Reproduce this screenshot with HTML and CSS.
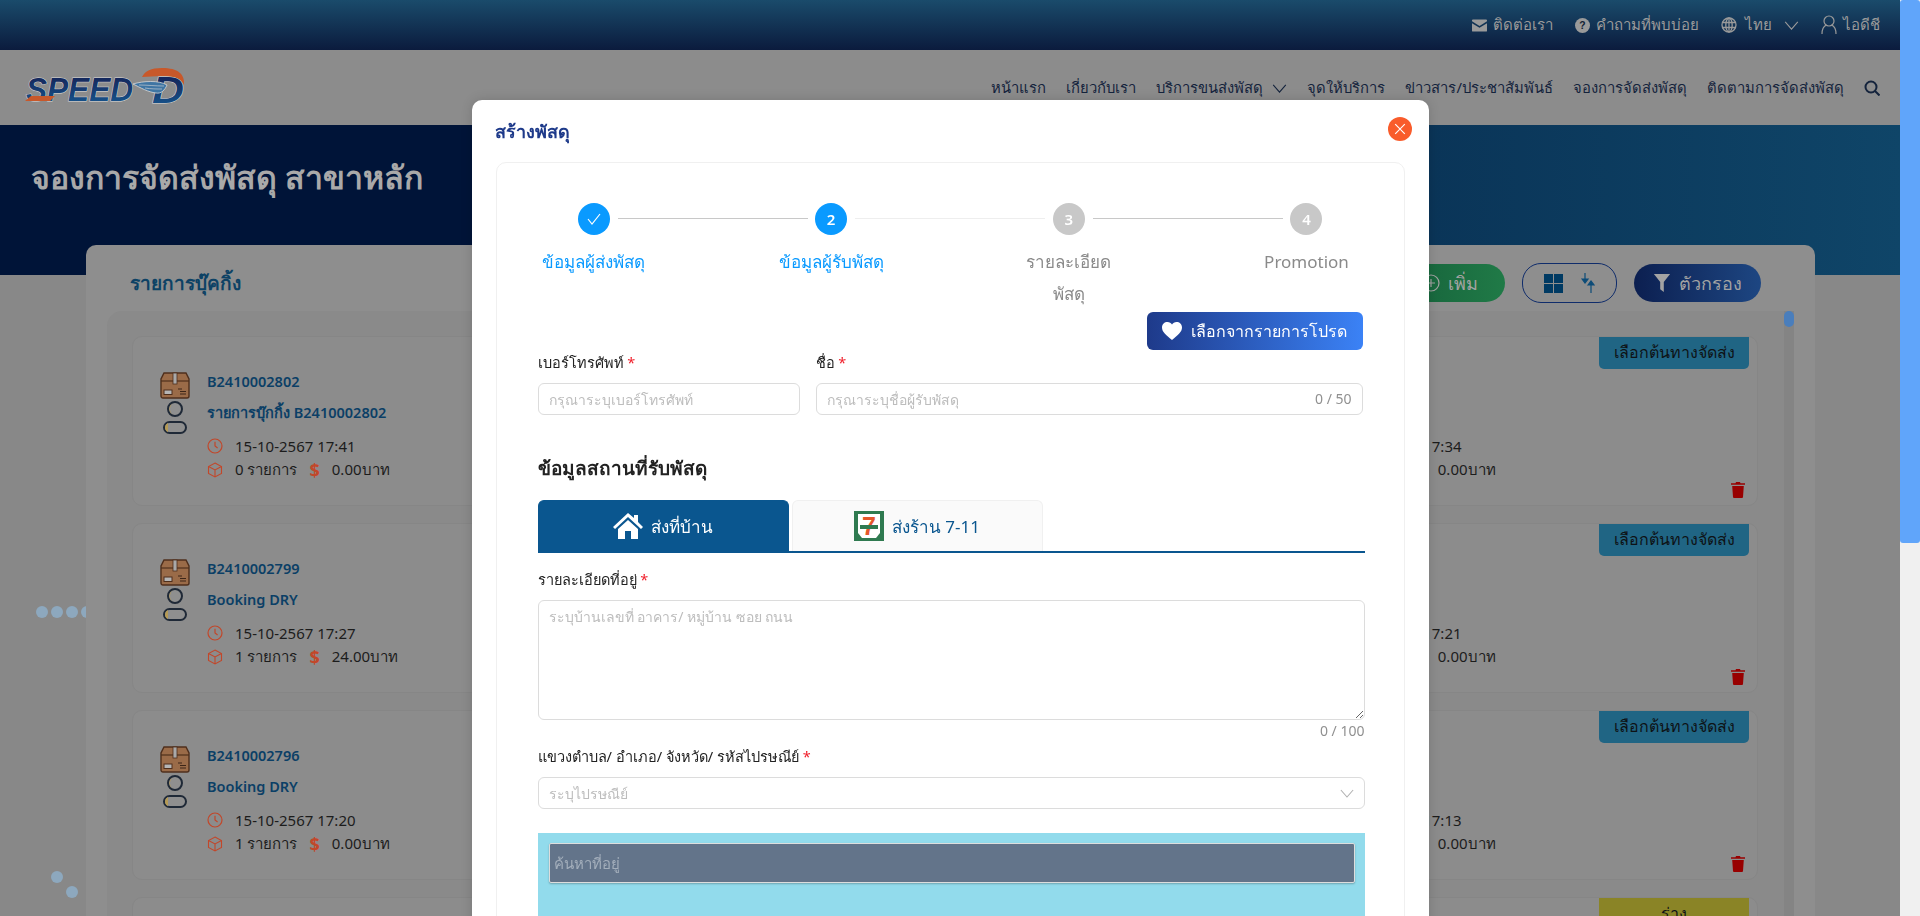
FILE: index.html
```html
<!DOCTYPE html>
<html lang="th">
  <head>
    <meta charset="UTF-8" />
    <meta name="viewport" content="width=device-width, initial-scale=1.0" />
    <title>จองการจัดส่งพัสดุ - Speed D</title>
    <link rel="stylesheet" href="styles.css">
  </head>
  <body>
    <svg class="sprite" width="0" height="0">
      <defs>
        <symbol id="box" viewBox="0 0 30 27">
          <path d="M4 1h22l3 6v17a2 2 0 0 1-2 2H3a2 2 0 0 1-2-2V7z" fill="#9a6b48" stroke="#4f2f1c" stroke-width="1.4"/>
          <path d="M1 9h28" stroke="#4f2f1c" stroke-width="1.2"/>
          <rect x="13" y="1" width="4" height="11" fill="#a9a9a9" stroke="#4f2f1c" stroke-width=".8"/>
          <rect x="4" y="18" width="8" height="4.5" fill="#b5b5b5" stroke="#4f2f1c" stroke-width="1"/>
          <path d="M18 17h4M20 19.5h6M20 22h6" stroke="#3d2618" stroke-width="1.2"/>
        </symbol>
        <symbol id="person" viewBox="0 0 24 33">
          <circle cx="12" cy="8" r="7" fill="#8f8f8f" stroke="#1f2937" stroke-width="2"/>
          <path d="M9 2.500a7 7 0 0 0 0 11 9 9 0 0 1 0-11z" fill="#b59a55"/>
          <rect x="1" y="21" width="22" height="11" rx="5.500" fill="#8f8f8f" stroke="#1f2937" stroke-width="2"/>
          <path d="M2 26a5 5 0 0 1 3-4v9a5 5 0 0 1-3-5z" fill="#b59a55"/>
        </symbol>
        <symbol id="clock" viewBox="0 0 16 16">
          <circle cx="8" cy="8" r="7" fill="none" stroke="currentColor" stroke-width="1.200"/>
          <path d="M8 3.800V8l2.600 2" fill="none" stroke="currentColor" stroke-width="1.200"/>
        </symbol>
        <symbol id="cube" viewBox="0 0 16 16">
          <path d="M8 1l6.500 3.500v7L8 15l-6.500-3.500v-7zM1.500 4.500L8 8l6.500-3.500M8 8v7" fill="none" stroke="currentColor" stroke-width="1.100"/>
        </symbol>
        <symbol id="trash" viewBox="0 0 14 16">
          <path d="M5 0h4l.5 1.200H14v1.600H0V1.200h4.500zM1.200 4h11.600l-.8 11a1 1 0 0 1-1 1H3a1 1 0 0 1-1-1z" fill="currentColor"/>
        </symbol>
        <symbol id="chev" viewBox="0 0 16 10">
          <path d="M1 1l7 8 7-8" fill="none" stroke="currentColor" stroke-width="1.200"/>
        </symbol>
      </defs>
    </svg>

    <div class="topbar">
      <a class="top-link">
        <svg class="ic14" viewBox="0 0 16 13"><path d="M1 0h14a1 1 0 0 1 1 1v1L8 7 0 2V1a1 1 0 0 1 1-1zM0 4l8 5 8-5v8a1 1 0 0 1-1 1H1a1 1 0 0 1-1-1z" fill="currentColor"/></svg>
        ติดต่อเรา
      </a>
      <a class="top-link">
        <svg class="ic14" viewBox="0 0 16 16"><circle cx="8" cy="8" r="8" fill="currentColor"/><text x="8" y="12" text-anchor="middle" class="q-mark">?</text></svg>
        คำถามที่พบบ่อย
      </a>
      <a class="top-link">
        <svg class="ic16" viewBox="0 0 16 16"><g fill="none" stroke="currentColor" stroke-width="1.300"><circle cx="8" cy="8" r="7"/><ellipse cx="8" cy="8" rx="3.200" ry="7"/><path d="M1 5.500h14M1 10.500h14M8 1v14"/></g></svg>
        <span class="lang">ไทย</span>
        <svg class="chev-top"><use href="#chev"/></svg>
      </a>
      <a class="top-link">
        <svg class="ic-user" viewBox="0 0 16 20"><g fill="none" stroke="currentColor" stroke-width="1.200"><circle cx="8" cy="6" r="5"/><path d="M1 19c0-5 2-8 4.500-9M15 19c0-5-2-8-4.500-9"/></g></svg>
        ไอดีชี
      </a>
    </div>

    <header class="navbar">
      <svg class="logo" viewBox="0 0 160 36">
        <defs>
          <linearGradient id="logoBlue" x1="0" y1="0" x2="0" y2="1">
            <stop offset="0" stop-color="#141a4e"/>
            <stop offset="1" stop-color="#175c94"/>
          </linearGradient>
        </defs>
        <path d="M117 9c3-6 9-9 20-9 16 0 23 6 22 17-3-7-10-9-23-9z" fill="#c8582a"/>
        <text x="1" y="33" textLength="107" lengthAdjust="spacingAndGlyphs" class="logo-word">SPEED</text>
        <path d="M0 33l6-5h24l-5 5z" fill="#c8582a"/>
        <text x="127" y="35" textLength="32" lengthAdjust="spacingAndGlyphs" class="logo-d">D</text>
        <path d="M108 16c10-3 26-4 34 1-2 5-6 9-11 8-8-1-15-5-23-9z" fill="#3f75a3" stroke="#d8d8d8" stroke-width=".8"/>
        <path d="M114 17c8 0 16 1 25 1M120 20c6 1 12 1 17 1" stroke="#d8d8d8" stroke-width=".6" fill="none"/>
      </svg>
      <nav class="menu">
        <a>หน้าแรก</a>
        <a>เกี่ยวกับเรา</a>
        <a class="has-chev">บริการขนส่งพัสดุ <svg class="chev-nav"><use href="#chev"/></svg></a>
        <a>จุดให้บริการ</a>
        <a>ข่าวสาร/ประชาสัมพันธ์</a>
        <a>จองการจัดส่งพัสดุ</a>
        <a>ติดตามการจัดส่งพัสดุ</a>
        <svg class="search" viewBox="0 0 16 16"><g fill="none" stroke="currentColor" stroke-width="2"><circle cx="7" cy="7" r="5.500"/><path d="M11 11l4.500 4.500"/></g></svg>
      </nav>
    </header>

    <section class="hero">
      <h1>จองการจัดส่งพัสดุ สาขาหลัก</h1>
    </section>

    <div class="dots dots-row"><i></i><i></i><i></i><i></i></div>
    <div class="dots dots-a"><i></i></div>
    <div class="dots dots-b"><i></i></div>

    <main class="card">
      <div class="card-head">
        <h2>รายการบุ๊คกิ้ง</h2>
        <div class="card-actions">
          <button class="btn-add">
            <svg class="ic18" viewBox="0 0 18 18"><g fill="none" stroke="currentColor" stroke-width="1.200"><circle cx="9" cy="9" r="8"/><path d="M9 5v8M5 9h8"/></g></svg>
            เพิ่ม
          </button>
          <div class="view-toggle">
            <svg class="ic-grid" viewBox="0 0 19 19"><path d="M0 0h9v9H0zM10 0h9v9h-9zM0 10h9v9H0zM10 10h9v9h-9z" fill="currentColor"/></svg>
            <svg class="ic-sort" viewBox="0 0 14 20"><path d="M4 0v8M1 6l3 4 3-4zM10 20v-10M7 12l3-4 3 4z" fill="currentColor" stroke="currentColor" stroke-width="1.200"/></svg>
          </div>
          <button class="btn-filter">
            <svg class="ic18" viewBox="0 0 18 20"><path d="M0 0h18l-7 9v11l-4-3V9z" fill="currentColor"/></svg>
            ตัวกรอง
          </button>
        </div>
      </div>

      <div class="list-panel">
        <div class="list-thumb"></div>

        <article class="item">
          <span class="tag">เลือกต้นทางจัดส่ง</span>
          <div class="item-icons">
            <svg class="ic-box"><use href="#box"/></svg>
            <svg class="ic-person"><use href="#person"/></svg>
          </div>
          <div class="item-info">
            <div class="item-id">B2410002802</div>
            <div class="item-id">รายการบุ๊กกิ้ง B2410002802</div>
            <div class="meta"><svg class="ic-meta"><use href="#clock"/></svg><span class="meta-text">15-10-2567 17:41</span></div>
            <div class="meta"><svg class="ic-meta"><use href="#cube"/></svg><span class="meta-text qty">0 รายการ</span><b class="dollar">$</b><span>0.00บาท</span></div>
          </div>
          <div class="item-side">
            <div class="meta"><span class="meta-text">15-10-2567 17:34</span></div>
            <div class="meta"><span class="meta-text qty">0 รายการ</span><b class="dollar">$</b><span>0.00บาท</span></div>
          </div>
          <svg class="ic-trash"><use href="#trash"/></svg>
        </article>

        <article class="item">
          <span class="tag">เลือกต้นทางจัดส่ง</span>
          <div class="item-icons">
            <svg class="ic-box"><use href="#box"/></svg>
            <svg class="ic-person"><use href="#person"/></svg>
          </div>
          <div class="item-info">
            <div class="item-id">B2410002799</div>
            <div class="item-id">Booking DRY</div>
            <div class="meta"><svg class="ic-meta"><use href="#clock"/></svg><span class="meta-text">15-10-2567 17:27</span></div>
            <div class="meta"><svg class="ic-meta"><use href="#cube"/></svg><span class="meta-text qty">1 รายการ</span><b class="dollar">$</b><span>24.00บาท</span></div>
          </div>
          <div class="item-side">
            <div class="meta"><span class="meta-text">15-10-2567 17:21</span></div>
            <div class="meta"><span class="meta-text qty">1 รายการ</span><b class="dollar">$</b><span>0.00บาท</span></div>
          </div>
          <svg class="ic-trash"><use href="#trash"/></svg>
        </article>

        <article class="item">
          <span class="tag">เลือกต้นทางจัดส่ง</span>
          <div class="item-icons">
            <svg class="ic-box"><use href="#box"/></svg>
            <svg class="ic-person"><use href="#person"/></svg>
          </div>
          <div class="item-info">
            <div class="item-id">B2410002796</div>
            <div class="item-id">Booking DRY</div>
            <div class="meta"><svg class="ic-meta"><use href="#clock"/></svg><span class="meta-text">15-10-2567 17:20</span></div>
            <div class="meta"><svg class="ic-meta"><use href="#cube"/></svg><span class="meta-text qty">1 รายการ</span><b class="dollar">$</b><span>0.00บาท</span></div>
          </div>
          <div class="item-side">
            <div class="meta"><span class="meta-text">15-10-2567 17:13</span></div>
            <div class="meta"><span class="meta-text qty">1 รายการ</span><b class="dollar">$</b><span>0.00บาท</span></div>
          </div>
          <svg class="ic-trash"><use href="#trash"/></svg>
        </article>

        <article class="item">
          <span class="tag tag-draft">ร่าง</span>
        </article>
      </div>
    </main>

    <div class="mask">
      <div class="modal">
        <div class="modal-head">
          <span class="modal-title">สร้างพัสดุ</span>
          <button class="modal-close" aria-label="close">
            <svg viewBox="0 0 10 10"><path d="M1 1l8 8M9 1l-8 8" stroke="currentColor" stroke-width="1"/></svg>
          </button>
        </div>
        <div class="modal-body">
          <div class="steps">
            <div class="step active">
              <span class="step-dot"><svg viewBox="0 0 14 12"><path d="M1 6l4 5 8-10" fill="none" stroke="currentColor" stroke-width="1.200"/></svg></span>
              <span class="step-label">ข้อมูลผู้ส่งพัสดุ</span>
            </div>
            <div class="step active">
              <span class="step-dot">2</span>
              <span class="step-label">ข้อมูลผู้รับพัสดุ</span>
            </div>
            <div class="step">
              <span class="step-dot">3</span>
              <span class="step-label">รายละเอียด<br>พัสดุ</span>
            </div>
            <div class="step">
              <span class="step-dot">4</span>
              <span class="step-label">Promotion</span>
            </div>
          </div>

          <div class="fav-row">
            <button class="btn-fav">
              <svg viewBox="0 0 20 18"><path d="M10 18C4 13 0 10 0 5.500 0 2 2.500 0 5.500 0 7.500 0 9 1 10 2.500 11 1 12.500 0 14.500 0 17.500 0 20 2 20 5.500 20 10 16 13 10 18z" fill="currentColor"/></svg>
              เลือกจากรายการโปรด
            </button>
          </div>

          <div class="form-row">
            <div class="field field-phone">
              <label>เบอร์โทรศัพท์ <em>*</em></label>
              <input type="text" placeholder="กรุณาระบุเบอร์โทรศัพท์" />
            </div>
            <div class="field field-name">
              <label>ชื่อ <em>*</em></label>
              <div class="input-wrap">
                <input type="text" placeholder="กรุณาระบุชื่อผู้รับพัสดุ" />
                <span class="count">0 / 50</span>
              </div>
            </div>
          </div>

          <h3 class="section-title">ข้อมูลสถานที่รับพัสดุ</h3>

          <div class="tabs">
            <div class="tab tab-on">
              <svg class="ic-home" viewBox="0 0 30 26"><path d="M15 0l6 5V2h4v7l5 5-2 2L15 4 2 16l-2-2zM5 16L15 7l10 9v10h-7v-8h-6v8H5z" fill="currentColor"/></svg>
              ส่งที่บ้าน
            </div>
            <div class="tab">
              <svg class="ic-711" viewBox="0 0 30 30">
                <rect width="30" height="30" fill="#2f7a50"/>
                <path d="M4 3h22v19l-4 5H8l-4-5z" fill="#fff"/>
                <text x="15" y="24" text-anchor="middle" class="seven">7</text>
                <rect x="6" y="14" width="18" height="4" fill="#2f7a50"/>
              </svg>
              ส่งร้าน 7-11
            </div>
          </div>

          <div class="field field-address">
            <label>รายละเอียดที่อยู่ <em>*</em></label>
            <textarea placeholder="ระบุบ้านเลขที่ อาคาร/ หมู่บ้าน ซอย ถนน"></textarea>
            <span class="count-below">0 / 100</span>
          </div>

          <div class="field field-zip">
            <label>แขวงตำบล/ อำเภอ/ จังหวัด/ รหัสไปรษณีย์ <em>*</em></label>
            <div class="input-wrap">
              <input type="text" placeholder="ระบุไปรษณีย์" />
              <svg class="zip-chev"><use href="#chev"/></svg>
            </div>
          </div>

          <div class="map">
            <input class="map-search" type="text" placeholder="ค้นหาที่อยู่" />
          </div>
        </div>
      </div>
    </div>

    <div class="page-scroll"><div class="page-thumb"></div></div>
  </body>
</html>
```

FILE: styles.css
```css
html {
  height: 100%;
  overflow: hidden;
}
body {
  margin: 0;
  padding-right: 20px;
  height: 100%;
  position: relative;
  overflow: hidden;
  font-family: "Noto Sans", "Open Sans", sans-serif;
  font-size: 15px;
  background: #888888;
  color: #1c1c1c;
}
.sprite {
  position: absolute;
}
h1, h2, h3 {
  margin: 0;
}
button {
  font-family: inherit;
  border: none;
}

/* window scrollbar */
.page-scroll {
  position: fixed;
  top: 0;
  right: 0;
  bottom: 0;
  width: 20px;
  background: #f0f0f0;
}
.page-thumb {
  height: 543px;
  border-radius: 3px;
  background: #60a5fa;
}

/* top strip */
.topbar {
  height: 50px;
  display: flex;
  justify-content: flex-end;
  align-items: center;
  gap: 22px;
  padding-right: 20px;
  background: linear-gradient(180deg, #1a4b6b 0%, #0b1b3d 100%);
  color: #9a9a9a;
  font-size: 15px;
}
.top-link {
  display: flex;
  align-items: center;
  gap: 6px;
}
.ic14 { width: 15px; height: 15px; }
.ic16 { width: 16px; height: 16px; margin-right: 2px; }
.ic-user { width: 16px; height: 20px; }
.chev-top { width: 15px; height: 9px; margin-left: 6px; }
.q-mark {
  font: bold 11px "Liberation Sans", sans-serif;
  fill: #123;
}

/* main nav */
.navbar {
  height: 75px;
  display: flex;
  justify-content: space-between;
  align-items: center;
  padding: 0 20px 0 25px;
  background: #8c8c8c;
}
.logo {
  width: 160px;
  height: 36px;
  margin-bottom: 3px;
  overflow: visible;
}
.logo-word {
  font: italic bold 34px "Liberation Sans", sans-serif;
  fill: url(#logoBlue);
  stroke: #d8d8d8;
  stroke-width: 1px;
  paint-order: stroke;
}
.logo-d {
  font: italic bold 37px "Liberation Sans", sans-serif;
  fill: url(#logoBlue);
  stroke: #d8d8d8;
  stroke-width: 1px;
  paint-order: stroke;
}
.menu {
  display: flex;
  align-items: center;
  gap: 20px;
  color: #14233c;
  font-size: 14.800px;
}
.chev-nav { width: 15px; height: 9px; margin-left: 6px; }
.search { width: 16px; height: 16px; }

/* banner */
.hero {
  height: 150px;
  padding: 28px 31px 0;
  box-sizing: border-box;
  background: linear-gradient(90deg, #001438 0%, #001438 25%, #0f4568 100%);
}
.hero h1 {
  font-size: 32px;
  font-weight: 600;
  line-height: 48px;
  color: #a9a9a9;
}

/* decoration behind the card */
.dots {
  position: absolute;
  display: flex;
  gap: 3px;
}
.dots i {
  width: 12px;
  height: 12px;
  border-radius: 50%;
  background: #8da8be;
}
.dots-row { left: 36px; top: 606px; }
.dots-a { left: 51px; top: 871px; }
.dots-b { left: 66px; top: 886px; }

/* booking card */
.card {
  position: relative;
  margin: -30px 85px 0 86px;
  padding: 0 21px 40px;
  background: #8e8e8e;
  border-radius: 10px;
}
.card-head {
  height: 66px;
  display: flex;
  align-items: center;
  justify-content: space-between;
  padding: 10px 33px 0 23px;
  box-sizing: border-box;
}
.card-head h2 {
  font-size: 19px;
  font-weight: 600;
  color: #0d4265;
}
.card-actions {
  display: flex;
  align-items: center;
  gap: 17px;
}
.card-actions button,
.view-toggle {
  height: 38px;
  border-radius: 19px;
  display: flex;
  align-items: center;
  justify-content: center;
  gap: 8px;
  color: #a3a3a3;
  font-size: 18px;
}
.ic18 { width: 18px; height: 18px; }
.btn-add {
  width: 110px;
  background: linear-gradient(90deg, #15613a, #207a47);
}
.view-toggle {
  width: 93px;
  gap: 18px;
  border: 1px solid #0f2c6b;
  color: #003a63;
}
.ic-grid { width: 19px; height: 19px; }
.ic-sort { width: 14px; height: 20px; color: #0d4c78; }
.btn-filter {
  width: 127px;
  background: linear-gradient(90deg, #0c1f50, #1d4682);
}

.list-panel {
  position: relative;
  padding: 25px 36px 40px 25px;
  background: #8a8a8a;
  border-radius: 15px 0 0 0;
  display: flex;
  flex-direction: column;
  gap: 17px;
  min-height: 1100px;
}
.list-panel::after {
  content: "";
  position: absolute;
  top: 0;
  right: 0;
  bottom: 0;
  width: 10px;
  background: #848484;
}
.list-thumb {
  position: absolute;
  top: 0;
  right: 0;
  width: 10px;
  height: 16px;
  border-radius: 5px;
  background: #4a7ebc;
  z-index: 1;
}
.item {
  position: relative;
  height: 170px;
  box-sizing: border-box;
  border: 1px solid #868686;
  border-radius: 10px;
  background: #8c8c8c;
  display: flex;
  padding: 33px 0 0 26px;
}
.tag {
  position: absolute;
  top: 0;
  right: 8px;
  width: 150px;
  height: 32px;
  border-radius: 0 0 5px 5px;
  background: #206584;
  color: #0e1215;
  font-size: 16px;
  line-height: 30px;
  text-align: center;
}
.tag-draft {
  background: #8a8426;
}
.item-icons {
  display: flex;
  flex-direction: column;
  align-items: center;
  width: 31px;
  margin: 2px 17px 0 0;
}
.ic-box { width: 30px; height: 27px; }
.ic-person { width: 24px; height: 33px; margin-top: 2px; }
.item-info {
  width: 400px;
}
.item-id {
  height: 31px;
  line-height: 22px;
  color: #0b3f66;
  font-weight: 600;
  font-size: 14.500px;
}
.item-id + .item-id {
  margin-bottom: 2px;
}
.meta {
  height: 24px;
  display: flex;
  align-items: center;
  font-size: 15px;
  color: #1c1c1c;
}
.ic-meta {
  width: 16px;
  height: 16px;
  margin-right: 12px;
  color: #c2472a;
}
.dollar {
  color: #c2472a;
  font-size: 18px;
  margin: 0 12px 0 12px;
}
.item-side {
  margin-left: 734px;
  padding-top: 64px;
}
.ic-trash {
  position: absolute;
  right: 12px;
  bottom: 7px;
  width: 14px;
  height: 16px;
  color: #980000;
}

/* dialog */
.mask {
  position: fixed;
  top: 0;
  left: 0;
  right: 20px;
  bottom: 0;
  overflow: hidden;
}
.modal {
  width: 957px;
  margin: 100px auto 0;
  background: #ffffff;
  border-radius: 10px;
  box-shadow: 0 0 12px rgba(0, 0, 0, 0.15);
}
.modal-head {
  height: 62px;
  display: flex;
  align-items: center;
  justify-content: space-between;
  padding: 0 17px 0 23px;
}
.modal-title {
  font-size: 18px;
  font-weight: 600;
  color: #1e3a8a;
}
.modal-close {
  width: 24px;
  height: 24px;
  padding: 6px;
  border-radius: 50%;
  background: #f95c2b;
  color: #ffffff;
  margin-bottom: 4px;
}
.modal-close svg {
  display: block;
}
.modal-body {
  margin: 0 24px;
  padding: 40px 41px 0;
  border: 1px solid #f0f0f0;
  border-radius: 10px;
  height: 800px;
  box-sizing: border-box;
}
.steps {
  display: flex;
  justify-content: space-between;
}
.step {
  position: relative;
  width: 112px;
  display: flex;
  flex-direction: column;
  align-items: center;
  color: #8a8a8a;
  font-size: 17px;
  line-height: 32px;
  text-align: center;
  white-space: nowrap;
}
.step-dot {
  width: 32px;
  height: 32px;
  border-radius: 50%;
  display: flex;
  align-items: center;
  justify-content: center;
  background: #c8c8c8;
  color: #ffffff;
  font-size: 15px;
  font-weight: 600;
  margin-bottom: 11px;
}
.step-dot svg {
  width: 14px;
  height: 12px;
}
.step:not(:last-child)::after {
  content: "";
  position: absolute;
  left: calc(50% + 24px);
  top: 15px;
  width: 190px;
  height: 1px;
  background: #c8c8c8;
}
.step:nth-child(2)::after {
  background: #eeeeee;
}
.step-label {
  width: 100%;
}
.step.active {
  color: #0a9aff;
}
.step.active .step-dot {
  background: #0a9aff;
}
.fav-row {
  display: flex;
  justify-content: flex-end;
  height: 38px;
  margin-top: 2px;
}
.btn-fav {
  width: 216px;
  height: 38px;
  border-radius: 6px;
  background: linear-gradient(90deg, #1e3a8a, #3b82f6);
  color: #ffffff;
  font-size: 16px;
  display: flex;
  align-items: center;
  justify-content: center;
  gap: 9px;
}
.btn-fav svg {
  width: 20px;
  height: 18px;
}
.form-row {
  display: flex;
  gap: 16px;
}
.field label {
  display: block;
  height: 33px;
  line-height: 24px;
  font-size: 14.500px;
  color: #222222;
}
.field em {
  color: #f0202c;
  font-style: normal;
}
.field-phone { width: 262px; }
.field-name { flex: 1; }
input,
textarea {
  display: block;
  width: 100%;
  box-sizing: border-box;
  height: 32px;
  padding: 0 10px;
  border: 1px solid #dcdcdc;
  border-radius: 6px;
  font-family: inherit;
  font-size: 14px;
  outline: none;
}
input::placeholder,
textarea::placeholder {
  color: #bdbdbd;
}
.input-wrap {
  position: relative;
}
.count {
  position: absolute;
  right: 11px;
  top: 0;
  line-height: 32px;
  font-size: 14px;
  color: #909090;
}
.section-title {
  margin-top: 35px;
  height: 50px;
  font-size: 19px;
  font-weight: 600;
  line-height: 36px;
  color: #222222;
}
.tabs {
  display: flex;
  gap: 3px;
  height: 51px;
  border-bottom: 2px solid #0a568f;
  width: 827px;
}
.tab {
  width: 251px;
  box-sizing: border-box;
  border: 1px solid #f0f0f0;
  border-bottom: none;
  border-radius: 6px 6px 0 0;
  background: #fafafa;
  color: #0a568f;
  font-size: 17px;
  display: flex;
  align-items: center;
  justify-content: center;
  gap: 8px;
}
.tab-on {
  background: #0a568f;
  border-color: #0a568f;
  color: #ffffff;
  font-weight: 500;
}
.ic-home { width: 30px; height: 26px; }
.ic-711 { width: 30px; height: 30px; }
.seven {
  font: bold 25px "Liberation Sans", sans-serif;
  fill: #e4572b;
}
.field-address {
  width: 827px;
  margin-top: 14px;
}
textarea {
  height: 120px;
  padding: 5px 10px;
  resize: vertical;
}
.count-below {
  display: block;
  height: 24px;
  text-align: right;
  font-size: 14px;
  line-height: 22px;
  color: #909090;
}
.field-zip {
  width: 827px;
}
.zip-chev {
  position: absolute;
  right: 11px;
  top: 12px;
  width: 14px;
  height: 9px;
  color: #b0b0b0;
}
.map {
  width: 827px;
  height: 200px;
  margin-top: 24px;
  padding: 10px 10px 0 11px;
  box-sizing: border-box;
  background: #92dbec;
}
.map-search {
  height: 40px;
  padding-left: 4px;
  border: 1px solid #dddddd;
  border-radius: 2px;
  background: #63748a;
  color: #ffffff;
  font-size: 15px;
  box-shadow: 0 1px 2px rgba(0, 0, 0, 0.25);
}
.map-search::placeholder {
  color: #a3aebb;
}
```
